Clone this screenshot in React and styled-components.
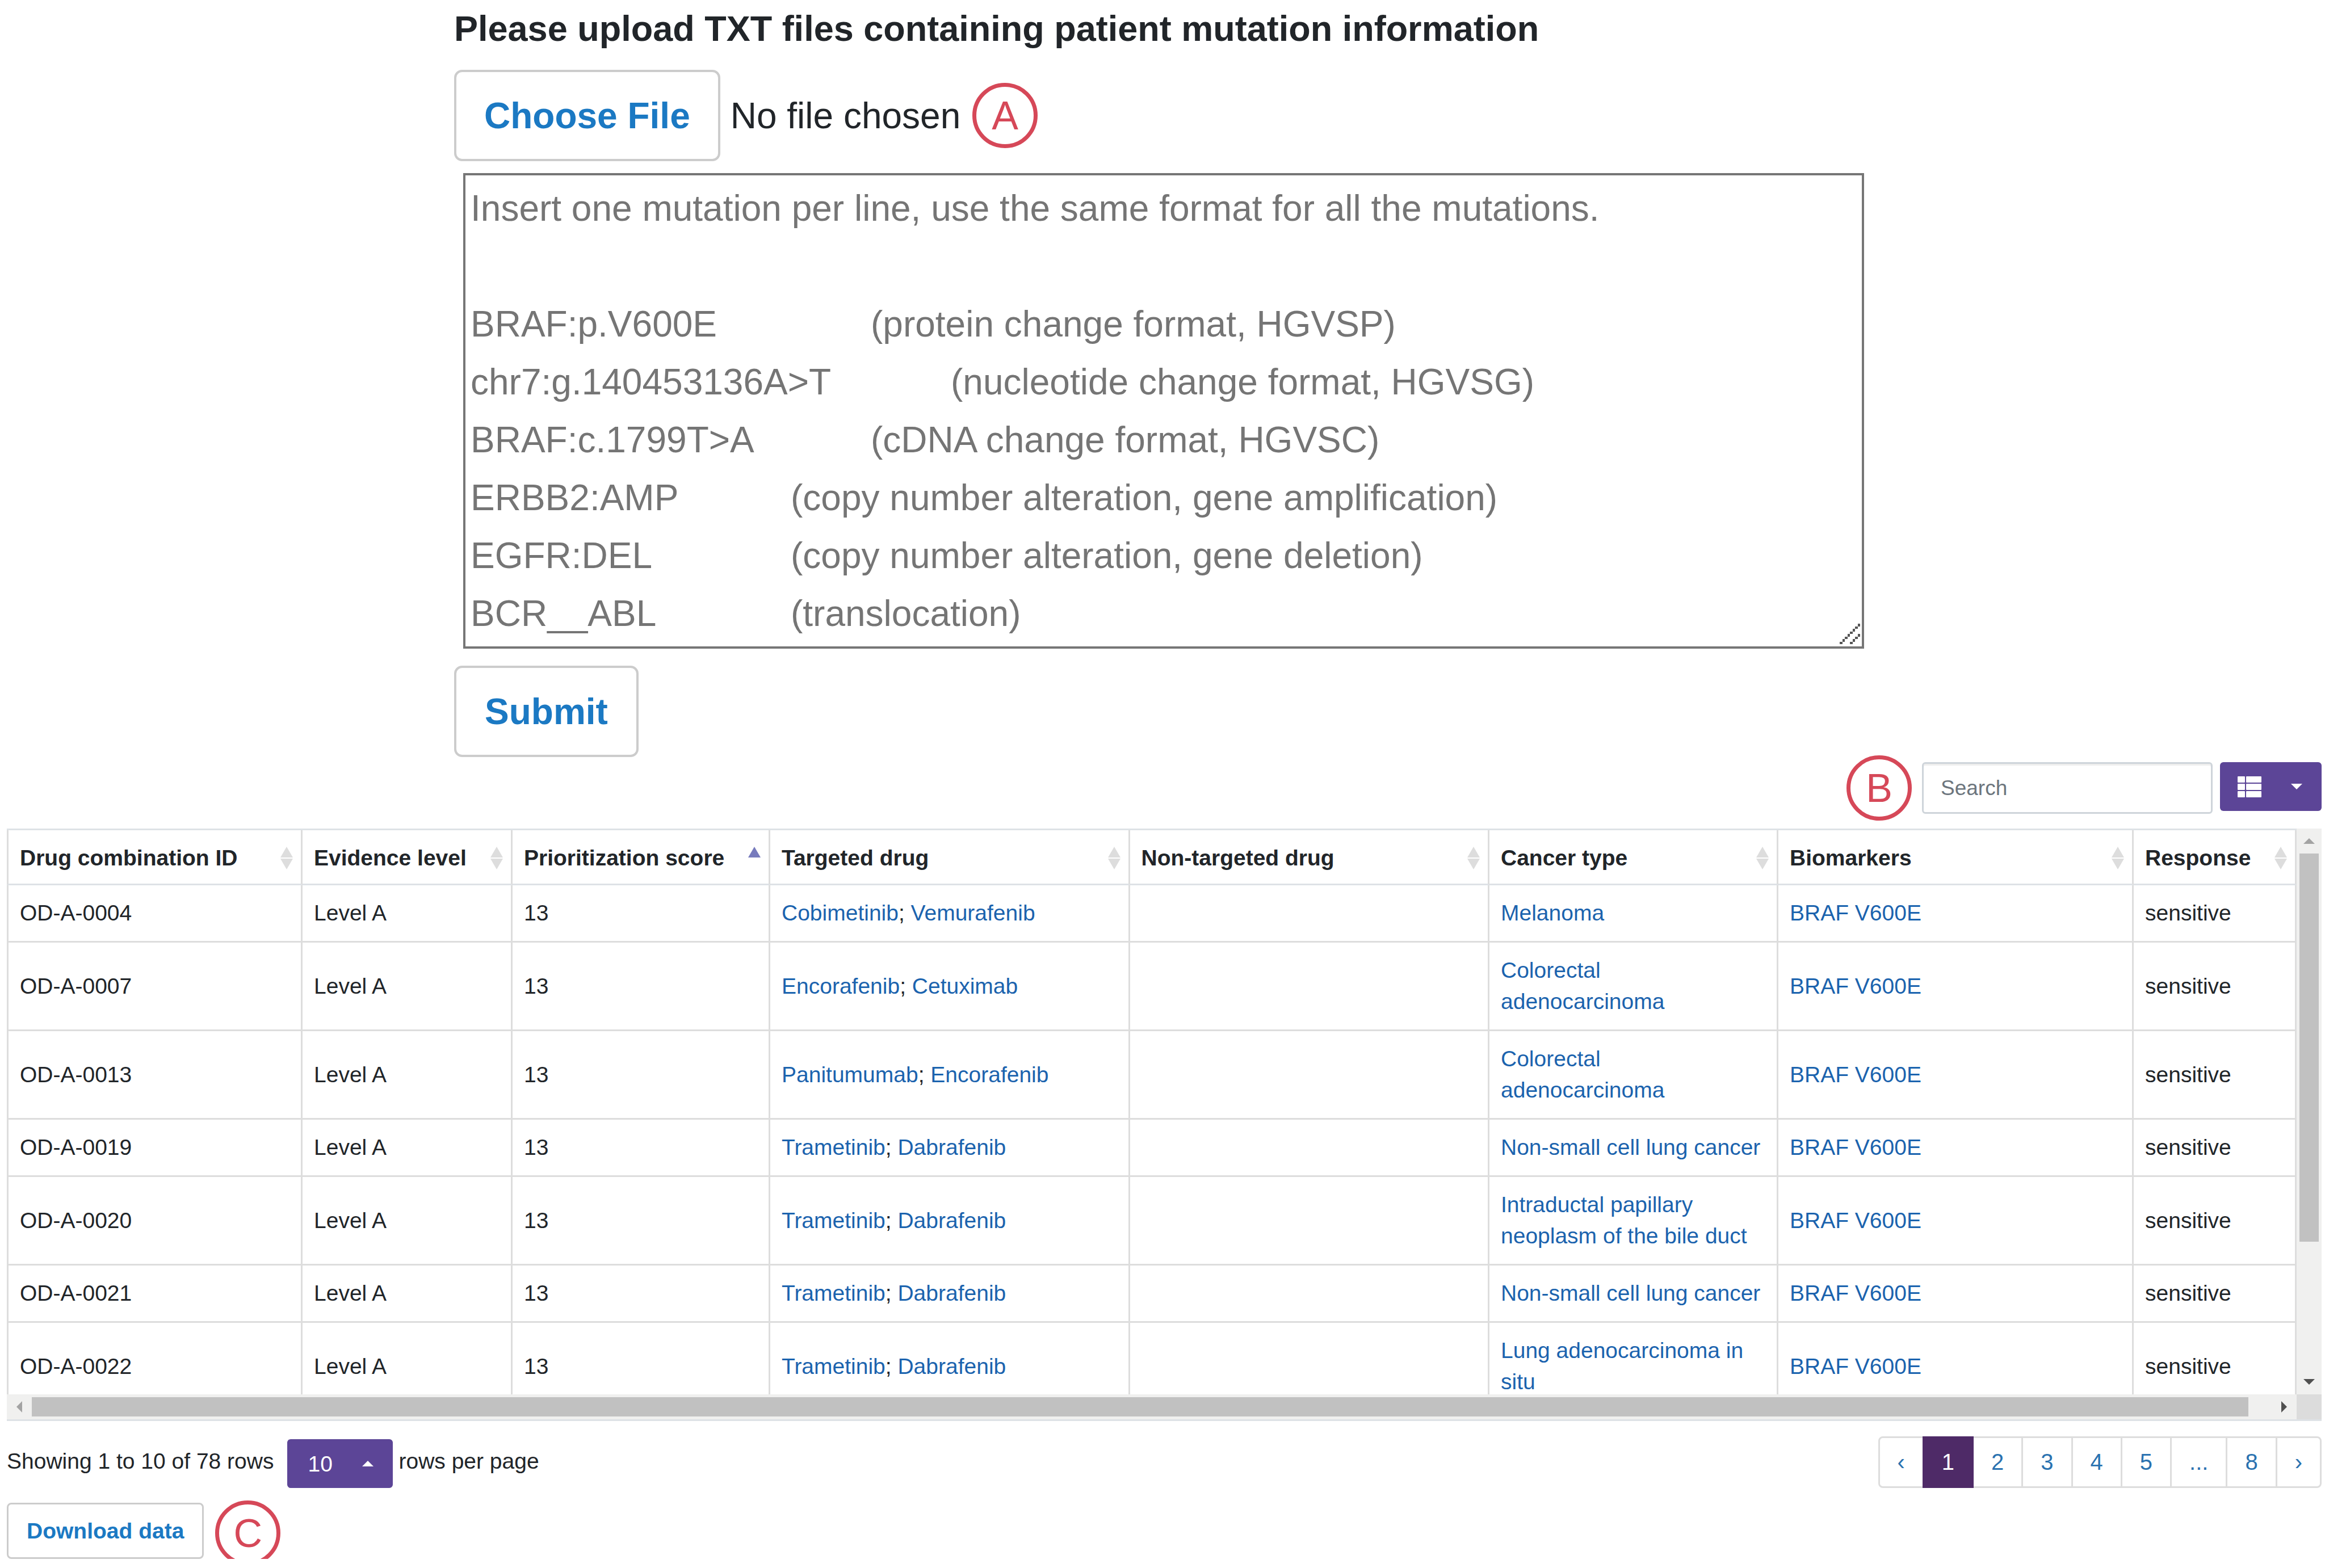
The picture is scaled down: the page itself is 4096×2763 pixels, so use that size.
import React from "react";
import styled, { createGlobalStyle } from "styled-components";

const GlobalStyle = createGlobalStyle`
  *, *::before, *::after { box-sizing: border-box; }
  body {
    margin: 0;
    background: #fff;
    color: #212529;
    font-family: "Liberation Sans", Arial, sans-serif;
    font-size: 39px;
    line-height: 55px;
  }
  button, input, select, textarea { font-family: inherit; color: inherit; margin: 0; }
`;

const Page = styled.main`
  display: flex;
  flex-direction: column;
`;

/* ---------- Upload form ---------- */

const UploadForm = styled.form`
  display: flex;
  flex-direction: column;
  align-items: flex-start;
  padding: 14px 812px 0 800px;
`;

const UploadLabel = styled.label`
  font-size: 63px;
  line-height: 72px;
  font-weight: 700;
  margin-bottom: 37px;
`;

const FileRow = styled.div`
  display: flex;
  align-items: center;
  gap: 20px;
  margin-bottom: 21px;
`;

const FileInput = styled.input`
  width: 893px;
  height: 161px;
  padding: 0;
  font-size: 64px;
  line-height: 72px;

  &::file-selector-button {
    height: 161px;
    margin: 0 18px 0 0;
    padding: 0 49px;
    border: 4px solid #ccc;
    border-radius: 14px;
    background: #fff;
    color: #1b79c3;
    font-family: inherit;
    font-size: 64px;
    line-height: 72px;
    font-weight: 700;
  }
`;

const OutlineButton = styled.button`
  height: ${(p) => (p.$large ? 161 : 99)}px;
  padding: 0 ${(p) => (p.$large ? 50 : 32)}px;
  border: ${(p) => (p.$large ? 4 : 3)}px solid #ccc;
  border-radius: ${(p) => (p.$large ? 14 : 8)}px;
  background: #fff;
  color: #1b79c3;
  font-size: ${(p) => (p.$large ? 64 : 39)}px;
  line-height: ${(p) => (p.$large ? 72 : 55)}px;
  font-weight: 700;
`;

const MutationField = styled.div`
  position: relative;
  align-self: stretch;
  margin: 0 0 30px 16px;
`;

const MutationText = styled.textarea`
  display: block;
  width: 100%;
  padding: 7px 9px;
  border: 4px solid #767676;
  border-radius: 0;
  background: #fff;
  font-size: 64px;
  line-height: 102px;
  tab-size: 141px;
  resize: none;
  overflow: hidden;

  &::placeholder { color: #757575; opacity: 1; }
`;

const Grip = styled.svg`
  position: absolute;
  right: 7px;
  bottom: 8px;
  width: 36px;
  height: 36px;
`;

const Badge = styled.span`
  flex: none;
  display: flex;
  align-items: center;
  justify-content: center;
  width: 115px;
  height: 115px;
  margin: -12px 0;
  border: 7px solid #d64858;
  border-radius: 50%;
  color: #d64858;
  font-size: 70px;
  line-height: 80px;
`;

/* ---------- Results ---------- */

const Results = styled.section`
  display: flex;
  flex-direction: column;
  padding: 9px 6px 0 12px;
`;

const Toolbar = styled.div`
  display: flex;
  justify-content: flex-end;
  align-items: flex-end;
  gap: 18px;
  margin-bottom: 26px;
`;

const ToolbarControls = styled.div`
  display: flex;
  align-items: flex-start;
  gap: 13px;
`;

const SearchInput = styled.input`
  width: 512px;
  height: 91px;
  padding: 0 30px;
  border: 3px solid #ced4da;
  border-radius: 6px;
  box-shadow: inset 0 3px 0 #eee;
  background: #fff;
  font-size: 37px;

  &::placeholder { color: #6c757d; opacity: 1; }
`;

const ColumnsButton = styled.button`
  display: flex;
  align-items: center;
  justify-content: space-between;
  width: 179px;
  height: 86px;
  padding: 0 34px 0 31px;
  border: 0;
  border-radius: 6px;
  background: #5c4597;
  color: #fff;
`;

const TableFrame = styled.div`
  display: grid;
  grid-template-columns: minmax(0, 1fr) 44px;
  grid-template-rows: 997px 44px;
  border-bottom: 3px solid #dee2e6;
`;

const TableViewport = styled.div`
  overflow: hidden;
  border-top: 3px solid #dee2e6;
`;

const Table = styled.table`
  width: 100%;
  table-layout: fixed;
  border-collapse: separate;
  border-spacing: 0;
`;

const Col = styled.col`
  width: ${(p) => (p.$w ? `${p.$w}px` : "auto")};
`;

const HeadCell = styled.th`
  padding: 0;
  border-right: 3px solid #ddd;
  border-bottom: 3px solid #dee2e6;
  &:first-child { border-left: 3px solid #ddd; }
`;

const SortButton = styled.button`
  display: flex;
  align-items: center;
  justify-content: space-between;
  width: 100%;
  padding: 21px 13px 18px 20px;
  border: 0;
  background: none;
  font-size: 39px;
  line-height: 55px;
  font-weight: 700;
  text-align: left;
  white-space: nowrap;
`;

const Cell = styled.td`
  padding: 21px 20px 22px;
  border-right: 3px solid #ddd;
  border-bottom: 3px solid #ddd;
  vertical-align: middle;
  &:first-child { border-left: 3px solid #ddd; }
`;

const Link = styled.a`
  color: #1b63ae;
  text-decoration: none;
`;

const ScrollTrack = styled.div`
  display: flex;
  flex-direction: ${(p) => (p.$vertical ? "column" : "row")};
  align-items: center;
  background: #f0f0ef;
`;

const ScrollArrow = styled.span`
  flex: none;
  display: flex;
  align-items: center;
  justify-content: center;
  width: 44px;
  height: 44px;
  color: ${(p) => (p.$active ? "#505050" : "#a3a3a3")};
`;

const ScrollLane = styled.div`
  display: flex;
  flex: 1;
  flex-direction: ${(p) => (p.$vertical ? "column" : "row")};
`;

const ScrollThumb = styled.span`
  background: #c1c1c1;
  ${(p) =>
    p.$vertical
      ? "width: 34px; height: 75.25%;"
      : "height: 34px; width: 98.95%;"}
`;

const ScrollCorner = styled.div`
  background: #dcdcdc;
`;

/* ---------- Footer ---------- */

const TableFooter = styled.div`
  display: flex;
  justify-content: space-between;
  align-items: flex-end;
  margin: 27px 0 26px;
`;

const PageInfo = styled.div`
  display: flex;
  align-items: center;
`;

const InfoText = styled.span`
  padding-bottom: 10px;
`;

const SizePicker = styled.div`
  position: relative;
  display: flex;
  margin: 0 10px 0 24px;
`;

const SizeSelect = styled.select`
  appearance: none;
  width: 186px;
  height: 86px;
  padding: 0 0 0 36px;
  border: 0;
  border-radius: 6px;
  background: #5c4597;
  color: #fff;
  font-size: 39px;
`;

const PickerCaret = styled.span`
  position: absolute;
  inset: 0 34px 0 auto;
  display: flex;
  align-items: center;
  pointer-events: none;
  color: #fff;
`;

const Pagination = styled.nav`
  display: flex;
  padding-left: 3px;
`;

const PageLink = styled.a`
  display: block;
  margin-left: -3px;
  padding: 15px 31px;
  border: 3px solid ${(p) => (p.$active ? "#4e2a67" : "#ddd")};
  background: ${(p) => (p.$active ? "#4e2a67" : "#fff")};
  color: ${(p) => (p.$active ? "#fff" : "#2a72b0")};
  position: relative;
  z-index: ${(p) => (p.$active ? 1 : 0)};
  font-size: 40px;
  text-decoration: none;
  &:first-child { border-radius: 8px 0 0 8px; }
  &:last-child { border-radius: 0 8px 8px 0; }
`;

const DownloadRow = styled.div`
  display: flex;
  align-items: flex-end;
  gap: 20px;
`;

/* ---------- Icons ---------- */

const Triangle = ({ dir, w, h }) => {
  const points = {
    up: `0,${h} ${w},${h} ${w / 2},0`,
    down: `0,0 ${w},0 ${w / 2},${h}`,
    left: `${w},0 ${w},${h} 0,${h / 2}`,
    right: `0,0 0,${h} ${w},${h / 2}`,
  }[dir];
  return (
    <svg width={w} height={h} viewBox={`0 0 ${w} ${h}`} aria-hidden="true">
      <polygon points={points} fill="currentColor" />
    </svg>
  );
};

const ListIcon = () => (
  <svg width="42" height="37" viewBox="0 0 42 37" fill="#fff" aria-hidden="true">
    {[0, 13, 26].map((y) => (
      <g key={y}>
        <rect x="0" y={y} width="13" height="11" rx="1" />
        <rect x="15" y={y} width="27" height="11" rx="1" />
      </g>
    ))}
  </svg>
);

const SortIcon = ({ sorted }) => (
  <svg width="24" height="40" viewBox="0 0 24 40" aria-hidden="true">
    <polygon points="12,0 23,19 1,19" fill={sorted ? "#777bbd" : "#ddd"} />
    {!sorted && <polygon points="1,21 23,21 12,40" fill="#ddd" />}
  </svg>
);

const GripIcon = () => (
  <Grip viewBox="0 0 8 8" fill="#555" shapeRendering="crispEdges" aria-hidden="true">
    {[0, 1, 2, 3, 4, 5, 6, 7].map((i) => (
      <rect key={`a${i}`} x={i} y={7 - i} width="1" height="1" />
    ))}
    {[4, 5, 6, 7].map((i) => (
      <rect key={`b${i}`} x={i} y={11 - i} width="1" height="1" />
    ))}
  </Grip>
);

/* ---------- Data ---------- */

const PLACEHOLDER = [
  "Insert one mutation per line, use the same format for all the mutations.",
  "",
  "BRAF:p.V600E\t\t(protein change format, HGVSP)",
  "chr7:g.140453136A>T\t\t(nucleotide change format, HGVSG)",
  "BRAF:c.1799T>A\t\t(cDNA change format, HGVSC)",
  "ERBB2:AMP\t\t(copy number alteration, gene amplification)",
  "EGFR:DEL\t\t(copy number alteration, gene deletion)",
  "BCR__ABL\t\t(translocation)",
].join("\n");

const COLUMNS = [
  { title: "Drug combination ID", width: 521 },
  { title: "Evidence level", width: 370 },
  { title: "Prioritization score", width: 454, sorted: true },
  { title: "Targeted drug" },
  { title: "Non-targeted drug" },
  { title: "Cancer type", width: 509 },
  { title: "Biomarkers", width: 626 },
  { title: "Response", width: 287 },
];

const ROWS = [
  { id: "OD-A-0004", drugs: ["Cobimetinib", "Vemurafenib"], cancer: "Melanoma" },
  { id: "OD-A-0007", drugs: ["Encorafenib", "Cetuximab"], cancer: "Colorectal adenocarcinoma" },
  { id: "OD-A-0013", drugs: ["Panitumumab", "Encorafenib"], cancer: "Colorectal adenocarcinoma" },
  { id: "OD-A-0019", drugs: ["Trametinib", "Dabrafenib"], cancer: "Non-small cell lung cancer" },
  { id: "OD-A-0020", drugs: ["Trametinib", "Dabrafenib"], cancer: "Intraductal papillary neoplasm of the bile duct" },
  { id: "OD-A-0021", drugs: ["Trametinib", "Dabrafenib"], cancer: "Non-small cell lung cancer" },
  { id: "OD-A-0022", drugs: ["Trametinib", "Dabrafenib"], cancer: "Lung adenocarcinoma in situ" },
];

const PAGES = ["‹", "1", "2", "3", "4", "5", "...", "8", "›"];

export default function App() {
  return (
    <>
      <GlobalStyle />
      <Page>
        <UploadForm onSubmit={(e) => e.preventDefault()}>
          <UploadLabel htmlFor="mutation-file">
            Please upload TXT files containing patient mutation information
          </UploadLabel>
          <FileRow>
            <FileInput id="mutation-file" type="file" accept=".txt" />
            <Badge>A</Badge>
          </FileRow>
          <MutationField>
            <MutationText rows={8} placeholder={PLACEHOLDER} aria-label="Mutations" spellCheck={false} />
            <GripIcon />
          </MutationField>
          <OutlineButton $large type="submit">Submit</OutlineButton>
        </UploadForm>

        <Results>
          <Toolbar>
            <Badge>B</Badge>
            <ToolbarControls>
              <SearchInput type="search" placeholder="Search" aria-label="Search" />
              <ColumnsButton type="button" aria-label="Columns" aria-haspopup="menu">
                <ListIcon />
                <Triangle dir="down" w={20} h={10} />
              </ColumnsButton>
            </ToolbarControls>
          </Toolbar>

          <TableFrame>
            <TableViewport>
              <Table>
                <colgroup>
                  {COLUMNS.map((c) => (
                    <Col key={c.title} $w={c.width} />
                  ))}
                </colgroup>
                <thead>
                  <tr>
                    {COLUMNS.map((c) => (
                      <HeadCell key={c.title} scope="col" aria-sort={c.sorted ? "ascending" : undefined}>
                        <SortButton type="button">
                          {c.title}
                          <SortIcon sorted={c.sorted} />
                        </SortButton>
                      </HeadCell>
                    ))}
                  </tr>
                </thead>
                <tbody>
                  {ROWS.map((r) => (
                    <tr key={r.id}>
                      <Cell>{r.id}</Cell>
                      <Cell>Level A</Cell>
                      <Cell>13</Cell>
                      <Cell>
                        <Link href="#">{r.drugs[0]}</Link>; <Link href="#">{r.drugs[1]}</Link>
                      </Cell>
                      <Cell />
                      <Cell><Link href="#">{r.cancer}</Link></Cell>
                      <Cell><Link href="#">BRAF V600E</Link></Cell>
                      <Cell>sensitive</Cell>
                    </tr>
                  ))}
                </tbody>
              </Table>
            </TableViewport>
            <ScrollTrack $vertical>
              <ScrollArrow><Triangle dir="up" w={20} h={10} /></ScrollArrow>
              <ScrollLane $vertical><ScrollThumb $vertical /></ScrollLane>
              <ScrollArrow $active><Triangle dir="down" w={20} h={10} /></ScrollArrow>
            </ScrollTrack>
            <ScrollTrack>
              <ScrollArrow><Triangle dir="left" w={10} h={20} /></ScrollArrow>
              <ScrollLane><ScrollThumb /></ScrollLane>
              <ScrollArrow $active><Triangle dir="right" w={10} h={20} /></ScrollArrow>
            </ScrollTrack>
            <ScrollCorner />
          </TableFrame>

          <TableFooter>
            <PageInfo>
              <InfoText>Showing 1 to 10 of 78 rows</InfoText>
              <SizePicker>
                <SizeSelect id="page-size" defaultValue="10">
                  <option value="10">10</option>
                </SizeSelect>
                <PickerCaret><Triangle dir="up" w={20} h={10} /></PickerCaret>
              </SizePicker>
              <InfoText as="label" htmlFor="page-size">rows per page</InfoText>
            </PageInfo>
            <Pagination aria-label="Pages">
              {PAGES.map((p) => (
                <PageLink key={p} href="#" $active={p === "1"}>{p}</PageLink>
              ))}
            </Pagination>
          </TableFooter>

          <DownloadRow>
            <OutlineButton type="button">Download data</OutlineButton>
            <Badge>C</Badge>
          </DownloadRow>
        </Results>
      </Page>
    </>
  );
}
